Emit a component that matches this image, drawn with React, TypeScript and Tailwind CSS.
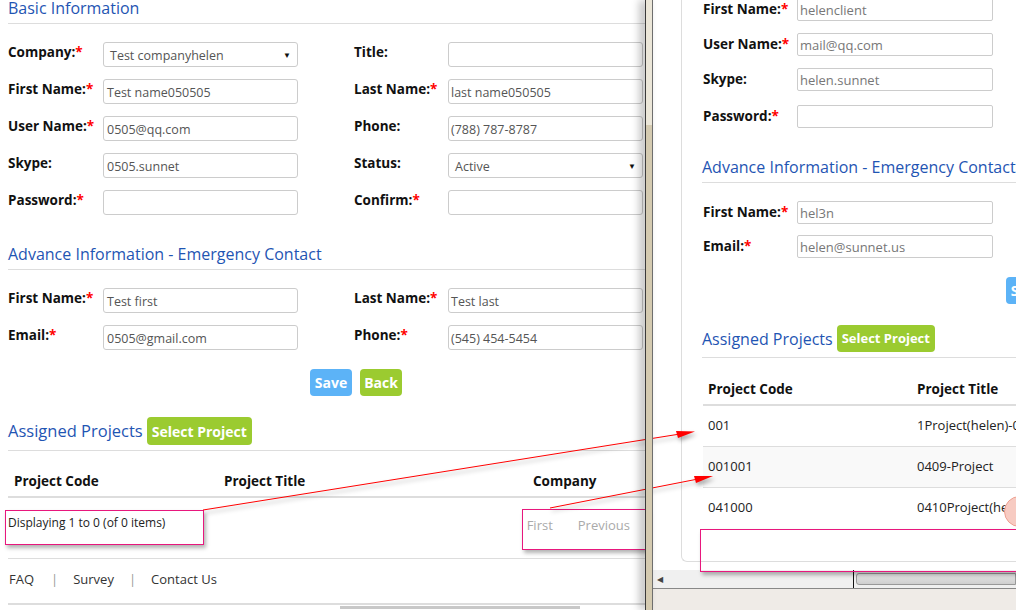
import React from 'react'

type Field = { label: string; req?: boolean; value?: string; select?: boolean }

const leftBasic: Field[][] = [
  [
    { label: 'Company:', req: true, value: 'Test companyhelen', select: true },
    { label: 'Title:' },
  ],
  [
    { label: 'First Name:', req: true, value: 'Test name050505' },
    { label: 'Last Name:', req: true, value: 'last name050505' },
  ],
  [
    { label: 'User Name:', req: true, value: '0505@qq.com' },
    { label: 'Phone:', value: '(788) 787-8787' },
  ],
  [
    { label: 'Skype:', value: '0505.sunnet' },
    { label: 'Status:', value: 'Active', select: true },
  ],
  [
    { label: 'Password:', req: true },
    { label: 'Confirm:', req: true },
  ],
]

const leftContact: Field[][] = [
  [
    { label: 'First Name:', req: true, value: 'Test first' },
    { label: 'Last Name:', req: true, value: 'Test last' },
  ],
  [
    { label: 'Email:', req: true, value: '0505@gmail.com' },
    { label: 'Phone:', req: true, value: '(545) 454-5454' },
  ],
]

const rightBasic: Field[] = [
  { label: 'First Name:', req: true, value: 'helenclient' },
  { label: 'User Name:', req: true, value: 'mail@qq.com' },
  { label: 'Skype:', value: 'helen.sunnet' },
  { label: 'Password:', req: true },
]

const rightContact: Field[] = [
  { label: 'First Name:', req: true, value: 'hel3n' },
  { label: 'Email:', req: true, value: 'helen@sunnet.us' },
]

const projects = [
  { code: '001', title: '1Project(helen)-001' },
  { code: '001001', title: '0409-Project' },
  { code: '041000', title: '0410Project(helen)' },
]

function Label({ f, width }: { f: Field; width: string }) {
  return (
    <div className={`${width} shrink-0 text-[13.5px] font-bold leading-5 text-[#111]`}>
      {f.label}
      {f.req && <span className="text-[#f00]">*</span>}
    </div>
  )
}

function LeftField({ f, labelW, pl }: { f: Field; labelW: string; pl: string }) {
  return (
    <div className="flex items-start">
      <Label f={f} width={labelW} />
      <div
        className={`flex h-[25px] w-[195px] shrink-0 items-center justify-between rounded-[3px] border border-[#ccc] bg-white pr-[6px] pt-[3px] text-[12.5px] text-[#555] ${f.select ? 'pl-[6px]' : pl}`}
      >
        <span>{f.value}</span>
        {f.select && <span className="-mt-[3px] text-[8px] text-[#111]">▼</span>}
      </div>
    </div>
  )
}

function RightField({ f }: { f: Field }) {
  return (
    <div className="flex items-start">
      <div className="pt-px">
        <Label f={f} width="w-[94px]" />
      </div>
      <div className="flex h-[23px] w-[196px] shrink-0 items-center rounded-[2px] border border-[#ccc] bg-white pl-[2px] pt-[3px] text-[13px] text-[#777]">
        {f.value}
      </div>
    </div>
  )
}

function Heading({ children, className = '' }: { children: React.ReactNode; className?: string }) {
  return (
    <div className={`border-b border-[#ddd] pb-[7px] text-[16px] leading-4 text-[#1f55b3] ${className}`}>
      {children}
    </div>
  )
}

function LeftGrid({ rows, className = '' }: { rows: Field[][]; className?: string }) {
  return (
    <div className={`flex flex-col gap-3 ${className}`}>
      {rows.map((r, i) => (
        <div key={i} className="flex gap-[56px]">
          <LeftField f={r[0]} labelW="w-[95px]" pl="pl-[3px]" />
          <LeftField f={r[1]} labelW="w-[94px]" pl="pl-[2px]" />
        </div>
      ))}
    </div>
  )
}

function Btn({ children, color }: { children: React.ReactNode; color: string }) {
  return (
    <div className={`flex h-[27px] w-[42px] items-center justify-center rounded-[4px] text-[14px] font-bold text-white ${color}`}>
      {children}
    </div>
  )
}

function Assigned({ h, title, btn }: { h: string; title: string; btn: string }) {
  return (
    <div className="mt-[21px] flex items-center gap-1 border-b border-[#ddd] pb-[5px]">
      <span className={`${title} leading-[22px] text-[#1f55b3]`}>Assigned Projects</span>
      <span className={`flex ${h} ${btn} items-center rounded-[4px] bg-[#9bcb30] font-bold text-white`}>
        Select Project
      </span>
    </div>
  )
}

function LeftPage() {
  return (
    <div className="h-[610px] w-[645px] shrink-0 overflow-hidden bg-white pl-2">
      <div className="w-[637px]">
        <Heading>Basic Information</Heading>
        <LeftGrid rows={leftBasic} className="mt-[18px]" />
        <Heading className="mt-[31px]">Advance Information - Emergency Contact</Heading>
        <LeftGrid rows={leftContact} className="mt-[18px]" />
        <div className="mt-[19px] flex gap-2 pl-[302px]">
          <Btn color="bg-[#5cb3f7]">Save</Btn>
          <Btn color="bg-[#9bcb30]">Back</Btn>
        </div>
        <Assigned h="h-[28px]" title="text-[16.5px]" btn="px-[5px] text-[14px]" />
        <div className="grid grid-cols-[210px_309px_1fr] border-b-2 border-[#ddd] pb-[5px] pl-[6px] pt-5 text-[13.5px] font-bold leading-5 text-[#111]">
          <span>Project Code</span>
          <span>Project Title</span>
          <span>Company</span>
        </div>
        <div className="flex h-[61px] items-start border-b border-[#ddd]">
          <span className="mt-[16px] text-[12px] leading-[18px] text-[#222]">Displaying 1 to 0 (of 0 items)</span>
          <div className="ml-auto mr-[15px] mt-[18px] flex gap-[25px] text-[13px] leading-[18px] text-[#aaa]">
            <span>First</span>
            <span>Previous</span>
          </div>
        </div>
        <div className="flex h-[44px] pl-px pt-[10px] text-[13px] leading-5 text-[#333]">
          <span>FAQ</span>
          <span className="ml-[17px] mr-[15px] text-[#999]">|</span>
          <span>Survey</span>
          <span className="mx-[15px] text-[#999]">|</span>
          <span>Contact Us</span>
        </div>
        <div className="h-[2px] bg-[#ddd]" />
      </div>
      <div className="ml-[332px] mt-[1px] h-[3px] w-[240px] bg-[#c8c8c8]" />
    </div>
  )
}

function Strip() {
  return (
    <div className="relative z-10 flex h-[610px] shrink-0 shadow-[-5px_0_8px_rgba(0,0,0,0.28)]">
      <div className="w-px bg-[#3a3a3a]" />
      <div className="flex w-[6px] flex-col">
        <div className="h-[125px] bg-[#ebe6d8]" />
        <div className="flex-1 bg-[#d4cab0]" />
      </div>
      <div className="w-px bg-[#6e6e6e]" />
    </div>
  )
}

function RightWindow() {
  return (
    <div className="flex h-[610px] min-w-0 flex-1 flex-col bg-white">
      <div className="h-[570px] overflow-hidden">
        <div className="ml-[28px] h-[564px] w-[420px] rounded-bl-[6px] border-b border-l border-[#ddd] pl-[21px]">
          <div className="-mt-[2px] flex flex-col gap-3">
            {rightBasic.map((f, i) => (
              <div key={f.label} className={i === 3 ? 'mt-[2px]' : ''}>
                <RightField f={f} />
              </div>
            ))}
          </div>
          <Heading className="-ml-px mt-[31px]">Advance Information - Emergency Contact</Heading>
          <div className="mt-[18px] flex flex-col gap-[11px]">
            {rightContact.map((f) => (
              <RightField key={f.label} f={f} />
            ))}
          </div>
          <div className="mt-[19px] flex gap-2 pl-[303px]">
            <Btn color="bg-[#5cb3f7]">Save</Btn>
          </div>
          <div className="-ml-px">
            <Assigned h="h-[27px]" title="text-[16px]" btn="px-[5px] text-[13px]" />
          </div>
          <div className="grid grid-cols-[209px_1fr] border-b-2 border-[#ddd] pb-[5px] pl-[5px] pt-[21px] text-[13.5px] font-bold leading-5 text-[#111]">
            <span>Project Code</span>
            <span>Project Title</span>
          </div>
          {projects.map((p, i) => (
            <div
              key={p.code}
              className={`grid h-[41px] grid-cols-[209px_1fr] items-center border-b pl-[5px] text-[13px] text-[#222] ${i === 1 ? 'bg-[#f9f9f9]' : 'bg-white'} ${i === 2 ? 'border-transparent' : 'border-[#ddd]'}`}
            >
              <span>{p.code}</span>
              <span className="whitespace-nowrap">{p.title}</span>
            </div>
          ))}
        </div>
      </div>
      <div className="flex h-[18px] items-stretch bg-[#f0f0f0]">
        <div className="flex w-[36px] items-center pl-[4px] text-[8px] text-[#444]">◀</div>
        <div className="flex-1" />
        <div className="w-px bg-[#111]" />
        <div className="ml-[2px] mt-[3px] h-[12px] w-[160px] rounded-l-[3px] border border-[#999] bg-gradient-to-b from-[#e6e6e6] to-[#cfcfcf]" />
      </div>
      <div className="h-[22px] border-t border-[#888] bg-[#efebe7]" />
    </div>
  )
}

function Annotations() {
  return (
    <>
      <div className="absolute left-[5px] top-[510px] h-[35px] w-[199px] border border-[#e8177d] shadow-[2px_3px_4px_rgba(0,0,0,0.3)]" />
      <div className="absolute left-[522px] top-[509px] h-[41px] w-[126px] border border-[#e8177d] shadow-[2px_3px_4px_rgba(0,0,0,0.3)]" />
      <div className="absolute left-[700px] top-[529px] h-[43px] w-[330px] border border-[#e8177d] shadow-[2px_3px_4px_rgba(0,0,0,0.3)]" />
      <div className="absolute left-[1004px] top-[496px] h-[31px] w-[31px] rounded-full border border-[#eea090] bg-[#f7cbc2]" />
      <svg
        className="pointer-events-none absolute left-0 top-0 drop-shadow-[2px_3px_2px_rgba(0,0,0,0.35)]"
        width="1016"
        height="610"
        viewBox="0 0 1016 610"
      >
        <line x1="203" y1="510" x2="680" y2="434" stroke="#f00" strokeWidth="1" />
        <polygon points="695,431.5 676,431 678,438" fill="#f00" />
        <line x1="550" y1="508" x2="698" y2="479" stroke="#f00" strokeWidth="1" />
        <polygon points="713,476 694,476 696,483" fill="#f00" />
      </svg>
    </>
  )
}

export default function App() {
  return (
    <div className="relative flex h-[610px] w-[1016px] overflow-hidden bg-white font-['Open_Sans',Arial,sans-serif]">
      <LeftPage />
      <Strip />
      <RightWindow />
      <Annotations />
    </div>
  )
}
